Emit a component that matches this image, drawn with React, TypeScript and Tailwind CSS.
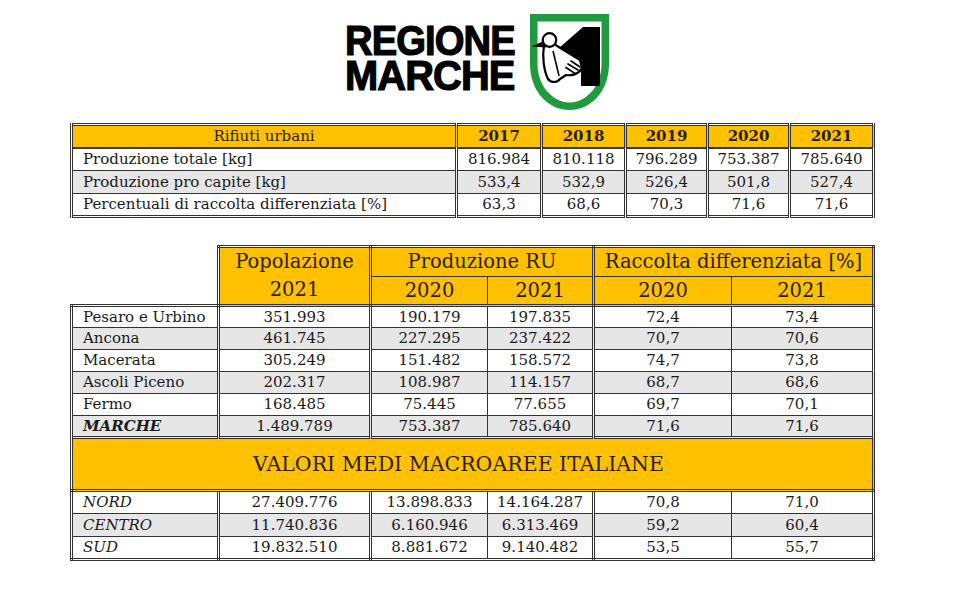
import React from "react";

const t1 = [
  ["Produzione totale [kg]", "816.984", "810.118", "796.289", "753.387", "785.640"],
  ["Produzione pro capite [kg]", "533,4", "532,9", "526,4", "501,8", "527,4"],
  ["Percentuali di raccolta differenziata [%]", "63,3", "68,6", "70,3", "71,6", "71,6"],
];

const t2 = [
  ["Pesaro e Urbino", "351.993", "190.179", "197.835", "72,4", "73,4"],
  ["Ancona", "461.745", "227.295", "237.422", "70,7", "70,6"],
  ["Macerata", "305.249", "151.482", "158.572", "74,7", "73,8"],
  ["Ascoli Piceno", "202.317", "108.987", "114.157", "68,7", "68,6"],
  ["Fermo", "168.485", "75.445", "77.655", "69,7", "70,1"],
  ["MARCHE", "1.489.789", "753.387", "785.640", "71,6", "71,6"],
];

const t3 = [
  ["NORD", "27.409.776", "13.898.833", "14.164.287", "70,8", "71,0"],
  ["CENTRO", "11.740.836", "6.160.946", "6.313.469", "59,2", "60,4"],
  ["SUD", "19.832.510", "8.881.672", "9.140.482", "53,5", "55,7"],
];

function Shield() {
  return (
    <svg width="79" height="96" viewBox="0 0 79 96">
      <path d="M0 0H79V50C79 76 62 96 39.5 96C17 96 0 76 0 50Z" fill="#1f9a3e" />
      <path d="M7.5 7.5H71.5V50C71.5 71 57 88.5 39.5 88.5C22 88.5 7.5 71 7.5 50Z" fill="#fff" />
      <path d="M29 34 L53 13 L70 13 L70 72 L51 72 L51 50 Z" fill="#000" />
      <path
        d="M14 31 C12 43 14 57 18 65 C21 69 27 69 30 65 L36 61 C42 62 49 60 52 54 L50 46 L32 35 L24 30 Z"
        fill="#fff"
        stroke="#000"
        strokeWidth="2.2"
        strokeLinejoin="round"
      />
      <path d="M23 37 C25 45 27 53 29 62" stroke="#000" strokeWidth="1.6" fill="none" />
      <path
        d="M41 47 L50 53 M38 50 L48 56 M36 53.5 L45 59.5"
        stroke="#000"
        strokeWidth="1.7"
        fill="none"
        strokeLinecap="round"
      />
      <path d="M15 26.5 L1.5 32.5 L16 33.5 Z" fill="#000" />
      <circle cx="19.5" cy="26" r="6.8" fill="#fff" stroke="#000" strokeWidth="2.2" />
    </svg>
  );
}

const cX = "border-x-[3px] border-y border-double border-[#333] text-center";
const cLs = "border-l-[3px] border-r border-y border-double border-[#333] text-center";
const cRs = "border-l border-r-[3px] border-y border-double border-[#333] text-center";
const cXb = "border-x-[3px] border-t border-b-[3px] border-double border-[#333] text-center";
const cLsb = "border-l-[3px] border-r border-t border-b-[3px] border-double border-[#333] text-center";
const cRsb = "border-l border-r-[3px] border-t border-b-[3px] border-double border-[#333] text-center";

export default function App() {
  return (
    <div className="w-[960px] h-[596px] bg-white overflow-hidden font-['DejaVu_Serif',serif] text-[#1a1a1a]">
      <div className="flex pl-[345px] pt-[14px]">
        <div className="w-[170px] pt-[9px] font-['Liberation_Sans',Arial,sans-serif] font-bold text-[42px] leading-[35px] tracking-[-1px] text-black [-webkit-text-stroke:1.2px_black]">
          <div className="whitespace-nowrap origin-left scale-x-[0.91]">REGIONE</div>
          <div className="whitespace-nowrap origin-left scale-x-[0.95]">MARCHE</div>
        </div>
        <div className="ml-[15px]">
          <Shield />
        </div>
      </div>

      <table className="mt-[13px] ml-[70px] w-[802px] table-fixed border-[3px] border-double border-[#333] text-[15px] leading-none">
        <colgroup>
          <col className="w-[385px]" />
          <col className="w-[85px]" />
          <col className="w-[84px]" />
          <col className="w-[82px]" />
          <col className="w-[82px]" />
          <col className="w-[84px]" />
        </colgroup>
        <thead>
          <tr className="h-[23px] bg-[#ffc000] text-[#2b2000]">
            <th className="border-x-[3px] border-y-2 border-double border-[#333] font-normal">Rifiuti urbani</th>
            {["2017", "2018", "2019", "2020", "2021"].map((y) => (
              <th key={y} className="border-x-[3px] border-y-2 border-double border-[#333] font-bold">
                {y}
              </th>
            ))}
          </tr>
        </thead>
        <tbody>
          {t1.map((r, i) => (
            <tr key={i} className={i === 1 ? "h-[23px] bg-[#e6e6e6]" : "h-[23px] bg-white"}>
              {r.map((c, j) => (
                <td
                  key={j}
                  className={
                    j === 0
                      ? "border-x-[3px] border-y border-double border-[#333] text-left pl-[10px] whitespace-nowrap"
                      : "border-x-[3px] border-y border-double border-[#333] text-center whitespace-nowrap"
                  }
                >
                  {c}
                </td>
              ))}
            </tr>
          ))}
        </tbody>
      </table>

      <table className="mt-[27px] ml-[70px] w-[802px] table-fixed text-[15px] leading-none">
        <colgroup>
          <col className="w-[147px]" />
          <col className="w-[152px]" />
          <col className="w-[117px]" />
          <col className="w-[106px]" />
          <col className="w-[138px]" />
          <col className="w-[142px]" />
        </colgroup>
        <thead className="text-[19.5px] font-normal text-[#2b2000]">
          <tr className="h-[27px]">
            <th className="bg-white"></th>
            <th
              rowSpan={2}
              className="bg-[#ffc000] font-normal leading-[28px] border-x-[3px] border-y-[3px] border-double border-[#333]"
            >
              Popolazione
              <br />
              2021
            </th>
            <th
              colSpan={2}
              className="bg-[#ffc000] font-normal border-x-[3px] border-t-[3px] border-b border-double border-[#333]"
            >
              Produzione RU
            </th>
            <th
              colSpan={2}
              className="bg-[#ffc000] font-normal border-x-[3px] border-t-[3px] border-b border-double border-[#333] whitespace-nowrap"
            >
              Raccolta differenziata [%]
            </th>
          </tr>
          <tr className="h-[27px]">
            <th className="bg-white"></th>
            <th className="bg-[#ffc000] font-normal border-l-[3px] border-r border-t border-b-[3px] border-double border-[#333]">2020</th>
            <th className="bg-[#ffc000] font-normal border-l border-r-[3px] border-t border-b-[3px] border-double border-[#333]">2021</th>
            <th className="bg-[#ffc000] font-normal border-l-[3px] border-r border-t border-b-[3px] border-double border-[#333]">2020</th>
            <th className="bg-[#ffc000] font-normal border-l border-r-[3px] border-t border-b-[3px] border-double border-[#333]">2021</th>
          </tr>
        </thead>
        <tbody>
          {t2.map((r, i) => (
            <tr key={i} className={i % 2 === 1 ? "h-[22px] bg-[#e6e6e6]" : "h-[22px] bg-white"}>
              <td
                className={
                  i === 5
                    ? "border-x-[3px] border-y border-double border-[#333] pl-[10px] text-left whitespace-nowrap font-bold italic"
                    : i === 0
                    ? "border-x-[3px] border-t-[3px] border-b border-double border-[#333] pl-[10px] text-left whitespace-nowrap"
                    : "border-x-[3px] border-y border-double border-[#333] pl-[10px] text-left whitespace-nowrap"
                }
              >
                {r[0]}
              </td>
              <td className={cX}>{r[1]}</td>
              <td className={cLs}>{r[2]}</td>
              <td className={cRs}>{r[3]}</td>
              <td className={cLs}>{r[4]}</td>
              <td className={cRs}>{r[5]}</td>
            </tr>
          ))}
          <tr className="h-[53px]">
            <td
              colSpan={6}
              className="bg-[#ffc000] text-[#2b2000] text-[20.5px] text-center pr-[28px] border-[3px] border-double border-[#333]"
            >
              VALORI MEDI MACROAREE ITALIANE
            </td>
          </tr>
          {t3.map((r, i) => (
            <tr key={i} className={i === 1 ? "h-[23px] bg-[#e6e6e6]" : "h-[23px] bg-white"}>
              <td
                className={
                  i === 2
                    ? "border-x-[3px] border-t border-b-[3px] border-double border-[#333] pl-[10px] text-left italic"
                    : "border-x-[3px] border-y border-double border-[#333] pl-[10px] text-left italic"
                }
              >
                {r[0]}
              </td>
              <td className={i === 2 ? cXb : cX}>{r[1]}</td>
              <td className={i === 2 ? cLsb : cLs}>{r[2]}</td>
              <td className={i === 2 ? cRsb : cRs}>{r[3]}</td>
              <td className={i === 2 ? cLsb : cLs}>{r[4]}</td>
              <td className={i === 2 ? cRsb : cRs}>{r[5]}</td>
            </tr>
          ))}
        </tbody>
      </table>
    </div>
  );
}
